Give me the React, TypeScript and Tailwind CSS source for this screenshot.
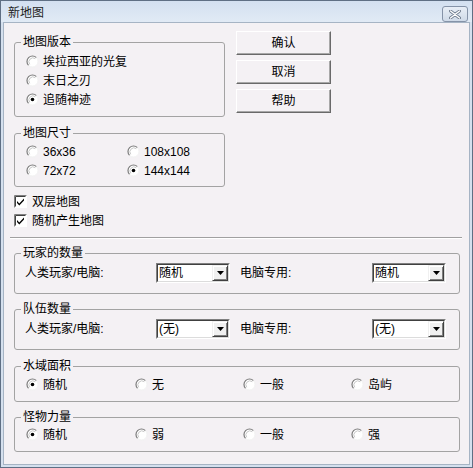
import React from 'react';

const font = { fontFamily: '"Liberation Sans", "Noto Sans CJK SC", sans-serif' };

function Radio({ checked = false }: { checked?: boolean }) {
  return (
    <svg width="13" height="13" viewBox="0 0 13 13" className="shrink-0">
      <circle cx="6.5" cy="6.5" r="5.5" fill="#ffffff" />
      <path d="M10.4 2.6 A5.5 5.5 0 0 0 2.6 10.4" fill="none" stroke="#7c7c7c" strokeWidth="1.2" />
      <path d="M9.3 3.7 A4 4 0 0 0 3.7 9.3" fill="none" stroke="#c8c8c8" strokeWidth="1" />
      <path d="M2.6 10.4 A5.5 5.5 0 0 0 10.4 2.6" fill="none" stroke="#f2f2f2" strokeWidth="1" />
      {checked && <circle cx="6.5" cy="6.5" r="1.8" fill="#000000" />}
    </svg>
  );
}

function Check() {
  return (
    <svg width="13" height="13" viewBox="0 0 13 13" className="shrink-0">
      <rect x="0" y="0" width="13" height="13" fill="#ffffff" />
      <path d="M0.5 12.5 V0.5 H12.5" fill="none" stroke="#808080" />
      <path d="M1.5 11.5 V1.5 H11.5" fill="none" stroke="#404040" />
      <path d="M3 6 L5.3 8.4 L10 3.6 V5.6 L5.3 10.4 L3 8 Z" fill="#000000" />
    </svg>
  );
}

function Group({ title, className, children }: { title: string; className?: string; children: React.ReactNode }) {
  return (
    <fieldset className={`border border-[#a3a3a3] rounded-[3px] m-0 p-0 min-w-0 ${className ?? ''}`}>
      <legend className="ml-[6px] px-[2px] leading-[14px] p-0">{title}</legend>
      {children}
    </fieldset>
  );
}

function Combo({ value }: { value: string }) {
  return (
    <div className="w-[74px] h-[20px] border border-t-[#808080] border-l-[#808080] border-b-white border-r-white">
      <div className="h-full border border-t-[#404040] border-l-[#404040] border-b-[#dcdcdc] border-r-[#dcdcdc] bg-white flex items-center">
        <span className="flex-1 pl-[1px] leading-[16px]">{value}</span>
        <div className="w-[16px] h-[16px] bg-[#f0f0f0] border border-t-[#f0f0f0] border-l-[#f0f0f0] border-b-[#404040] border-r-[#404040] shadow-[inset_1px_1px_0_#ffffff,inset_-1px_-1px_0_#808080] flex items-center justify-center">
          <svg width="7" height="4" viewBox="0 0 7 4">
            <path d="M0 0 H7 L3.5 4 Z" fill="#000000" />
          </svg>
        </div>
      </div>
    </div>
  );
}

function Button({ label }: { label: string }) {
  return (
    <div className="w-[95px] h-[24px] flex items-center justify-center bg-[#f4f1f4] border border-t-white border-l-white border-b-[#696969] border-r-[#696969] shadow-[inset_-1px_-1px_0_#a8a8a8]">
      {label}
    </div>
  );
}

export default function App() {
  return (
    <div style={font} className="w-[473px] h-[468px] text-[12px] text-black flex flex-col border border-[#5f6f84] bg-[#d5e0ee]">
      <div className="h-[21px] shrink-0 flex items-center justify-between bg-gradient-to-b from-[#d3e0f0] to-[#e1eaf5] pl-[7px] pr-[4px]">
        <span className="text-[#1c1c1c] mt-[2px]">新地图</span>
        <div className="w-[26px] h-[16px] mt-[5px] rounded-[3px] border border-[#8593a8] bg-gradient-to-b from-[#e8eef6] to-[#cfdae8] flex items-center justify-center">
          <svg width="12" height="9" viewBox="0 0 12 9">
            <path d="M1.5 1 L10.5 8 M10.5 1 L1.5 8" stroke="#6d7a8c" strokeWidth="3" strokeLinecap="round" />
            <path d="M1.5 1 L10.5 8 M10.5 1 L1.5 8" stroke="#ffffff" strokeWidth="1.4" strokeLinecap="round" />
          </svg>
        </div>
      </div>

      <div className="flex-1 mx-[2px] mb-[2px] border border-[#a6b4c4] bg-[#f4f1f4] pl-[10px] pt-[8px]">
        <div className="flex items-start">
          <div className="w-[211px] mt-[4px]">
            <Group title="地图版本" className="h-[82px]">
              <div className="pt-[3px] pl-[11px]">
                {['埃拉西亚的光复', '末日之刃', '追随神迹'].map((t, i) => (
                  <div key={t} className="h-[19px] flex items-center gap-[4px]">
                    <Radio checked={i === 2} />
                    <span>{t}</span>
                  </div>
                ))}
              </div>
            </Group>

            <Group title="地图尺寸" className="h-[61px] mt-[9px]">
              <div className="pt-[2px] pl-[11px] grid grid-cols-[101px_1fr]">
                {['36x36', '108x108', '72x72', '144x144'].map((t, i) => (
                  <div key={t} className="h-[19px] flex items-center gap-[4px]">
                    <Radio checked={i === 3} />
                    <span>{t}</span>
                  </div>
                ))}
              </div>
            </Group>

            <div className="mt-[5px]">
              {['双层地图', '随机产生地图'].map((t) => (
                <div key={t} className="h-[19px] flex items-center gap-[5px]">
                  <Check />
                  <span>{t}</span>
                </div>
              ))}
            </div>
          </div>

          <div className="ml-[11px] flex flex-col gap-[5px]">
            <Button label="确认" />
            <Button label="取消" />
            <Button label="帮助" />
          </div>
        </div>

        <div className="mt-[7px] -ml-[4px] w-[452px] border-t border-t-[#a0a0a0] border-b border-b-white" />

        <div className="w-[446px]">
          <Group title="玩家的数量" className="h-[48px] mt-[7px]">
            <div className="pt-[3px] pl-[10px] flex items-center">
              <span className="w-[131px]">人类玩家/电脑:</span>
              <Combo value="随机" />
              <span className="w-[132px] ml-[10px]">电脑专用:</span>
              <Combo value="随机" />
            </div>
          </Group>

          <Group title="队伍数量" className="h-[48px] mt-[8px]">
            <div className="pt-[3px] pl-[10px] flex items-center">
              <span className="w-[131px]">人类玩家/电脑:</span>
              <Combo value="(无)" />
              <span className="w-[132px] ml-[10px]">电脑专用:</span>
              <Combo value="(无)" />
            </div>
          </Group>

          <Group title="水域面积" className="h-[43px] mt-[9px]">
            <div className="pt-[2px] pl-[11px] grid grid-cols-[109px_108px_108px_1fr]">
              {['随机', '无', '一般', '岛屿'].map((t, i) => (
                <div key={t} className="h-[19px] flex items-center gap-[4px]">
                  <Radio checked={i === 0} />
                  <span>{t}</span>
                </div>
              ))}
            </div>
          </Group>

          <Group title="怪物力量" className="h-[42px] mt-[8px]">
            <div className="pt-[1px] pl-[11px] grid grid-cols-[109px_108px_108px_1fr]">
              {['随机', '弱', '一般', '强'].map((t, i) => (
                <div key={t} className="h-[19px] flex items-center gap-[4px]">
                  <Radio checked={i === 0} />
                  <span>{t}</span>
                </div>
              ))}
            </div>
          </Group>
        </div>
      </div>
    </div>
  );
}
